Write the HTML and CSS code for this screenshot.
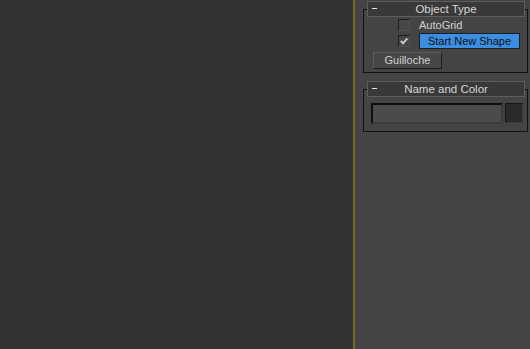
FILE: index.html
```html
<!DOCTYPE html>
<html lang="en">
<head>
    <meta charset="UTF-8">
    <title>Command Panel</title>
    <link rel="stylesheet" href="styles.css">
</head>
<body>
    <div class="viewport"></div>
    <div class="divider"></div>
    <aside class="panel">
        <section class="rollout">
            <div class="rollout-head"><span class="minus"></span>Object Type</div>
            <div class="check-row first">
                <span class="checkbox"></span>
                <span class="check-label">AutoGrid</span>
            </div>
            <div class="check-row second">
                <span class="checkbox">
                    <svg width="10" height="10" viewBox="0 0 10 10"><path d="M1.8 4.8 L4 7.3 L8.4 2.4" fill="none" stroke="#d0d0d0" stroke-width="1.8"/></svg>
                </span>
                <span class="blue-btn">Start New Shape</span>
            </div>
            <div class="btn-row">
                <span class="btn">Guilloche</span>
            </div>
        </section>
        <section class="rollout name-color">
            <div class="rollout-head"><span class="minus"></span>Name and Color</div>
            <div class="name-row">
                <span class="name-field"></span>
                <span class="swatch"></span>
            </div>
        </section>
    </aside>
</body>
</html>
```

FILE: styles.css
```css
body {
    margin: 0;
    width: 530px;
    height: 349px;
    display: flex;
    overflow: hidden;
    font-family: 'Liberation Sans', Arial, sans-serif;
    font-size: 11px;
    background-color: #444444;
}
.viewport {
    width: 353px;
    background-color: #333333;
}
.divider {
    width: 2px;
    background-color: #756a1c;
}
.panel {
    flex: 1;
    background-color: #444444;
    padding-top: 9px;
}
.rollout {
    margin-left: 8px;
    width: 163px;
    height: 62px;
    border: 1px solid #111111;
}
.rollout.name-color {
    margin-top: 16px;
    height: 41px;
}
.rollout-head {
    position: relative;
    margin: -9px 2px 0 3px;
    height: 14px;
    line-height: 14px;
    border: 1px solid #5e5e5e;
    background-color: #393939;
    color: #d6d6d6;
    text-align: center;
    font-size: 11.5px;
}
.minus {
    position: absolute;
    left: 4px;
    top: 6px;
    width: 5px;
    height: 1px;
    background-color: #e6e6e6;
}
.check-row {
    display: flex;
    align-items: center;
    margin-left: 34px;
}
.check-row.first {
    margin-top: 1px;
    height: 14px;
}
.check-row.second {
    margin-top: 1px;
    height: 16px;
}
.checkbox {
    width: 10px;
    height: 10px;
    border: 1px solid #1c1c1c;
    border-right-color: #555555;
    border-bottom-color: #555555;
    background-color: #464646;
    display: flex;
    align-items: center;
    justify-content: center;
}
.check-label {
    margin-left: 9px;
    color: #d2d2d2;
}
.blue-btn {
    margin-left: 9px;
    width: 99px;
    height: 14px;
    line-height: 14px;
    border: 1px solid #1e1e1e;
    background-color: #3c8ee2;
    color: #111111;
    text-align: center;
}
.btn-row {
    margin: 3px 0 0 9px;
    height: 17px;
}
.btn {
    display: block;
    width: 67px;
    height: 15px;
    line-height: 15px;
    border: 1px solid #5c5c5c;
    border-right-color: #1c1c1c;
    border-bottom-color: #1c1c1c;
    background-color: #474747;
    color: #d0d0d0;
    text-align: center;
}
.name-row {
    display: flex;
    margin: 6px 0 0 7px;
    gap: 2px;
}
.name-field {
    width: 128px;
    height: 17px;
    border-top: 2px solid #0e0e0e;
    border-left: 2px solid #0e0e0e;
    border-right: 2px solid #3a3a3a;
    border-bottom: 2px solid #3a3a3a;
    background-color: #4b4b4b;
}
.swatch {
    width: 16px;
    height: 18px;
    border: 1px solid #151515;
    border-right-color: #3a3a3a;
    border-bottom-color: #3a3a3a;
    background-color: #2a2a2a;
}
```
